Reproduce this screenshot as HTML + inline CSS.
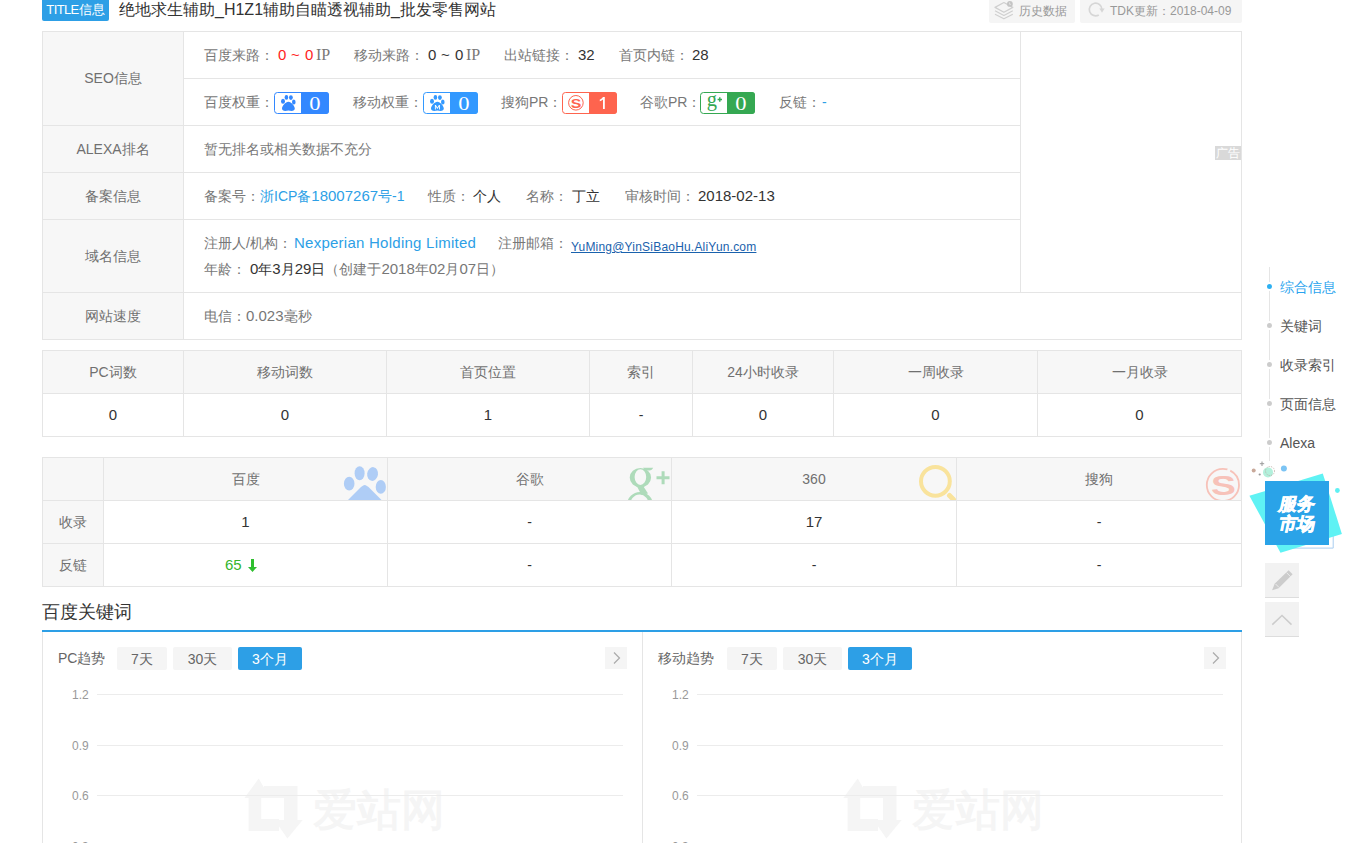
<!DOCTYPE html>
<html><head><meta charset="utf-8">
<style>
*{margin:0;padding:0;box-sizing:border-box}
html,body{width:1362px;height:843px;overflow:hidden;background:#fff}
body{position:relative;font-family:"Liberation Sans",sans-serif;font-size:14px;color:#333}
.a{position:absolute;white-space:nowrap}
.hl{position:absolute;height:1px;background:#e5e5e5}
.vl{position:absolute;width:1px;background:#e5e5e5}
.bg{position:absolute;background:#f7f7f7}
.lab{color:#777}
.hd{color:#707070}
.c{position:absolute;text-align:center;white-space:nowrap}
.n{font-size:15px;line-height:46px}
.m{font-size:15px}
.ip{font-family:"Liberation Serif",serif;font-size:16px;line-height:46px;color:#777}
</style></head><body>

<!-- title bar -->
<div class="a" style="left:42px;top:0;width:67px;height:21px;background:#2d9fe6;border-radius:0 0 2px 2px;color:#fff;font-size:13px;line-height:20px;text-align:center"><span style="letter-spacing:-0.6px">TITLE</span>信息</div>
<div class="a" style="left:119px;top:0;font-size:16px;line-height:20px;color:#333">绝地求生辅助_H1Z1辅助自瞄透视辅助_批发零售网站</div>
<div class="a" style="left:989px;top:0;width:86px;height:23px;background:#f5f5f5;border-radius:0 0 2px 2px"></div>
<div class="a" style="left:1080px;top:0;width:162px;height:23px;background:#f5f5f5;border-radius:0 0 2px 2px"></div>
<div class="a" style="left:1019px;top:0;font-size:12px;line-height:22px;color:#999">历史数据</div>
<div class="a" style="left:1110px;top:0;font-size:12px;line-height:22px;color:#999">TDK更新：2018-04-09</div>

<!-- info table -->
<div class="bg" style="left:42px;top:31px;width:141px;height:308px"></div>
<div class="hl" style="left:42px;top:31px;width:1200px"></div>
<div class="hl" style="left:183px;top:78px;width:837px"></div>
<div class="hl" style="left:42px;top:125px;width:978px"></div>
<div class="hl" style="left:42px;top:172px;width:978px"></div>
<div class="hl" style="left:42px;top:219px;width:978px"></div>
<div class="hl" style="left:42px;top:292px;width:1200px"></div>
<div class="hl" style="left:42px;top:339px;width:1200px"></div>
<div class="vl" style="left:42px;top:31px;height:309px"></div>
<div class="vl" style="left:183px;top:31px;height:309px"></div>
<div class="vl" style="left:1020px;top:31px;height:262px"></div>
<div class="vl" style="left:1241px;top:31px;height:309px"></div>
<div class="a" style="left:1215px;top:146px;width:26px;height:14px;background:#d9d9d9;color:#fff;font-size:12px;line-height:15px;text-align:center">广告</div>

<div class="c hd" style="left:43px;top:32px;width:140px;line-height:93px">SEO信息</div>
<div class="c hd" style="left:43px;top:126px;width:140px;line-height:46px">ALEXA排名</div>
<div class="c hd" style="left:43px;top:173px;width:140px;line-height:46px">备案信息</div>
<div class="c hd" style="left:43px;top:220px;width:140px;line-height:72px">域名信息</div>
<div class="c hd" style="left:43px;top:293px;width:140px;line-height:46px">网站速度</div>

<!-- row 1 -->
<div class="a lab" style="left:204px;top:32px;line-height:46px">百度来路：</div>
<div class="a n" style="left:278px;top:32px;color:#f22">0</div>
<div class="a n" style="left:291px;top:32px;color:#f22">~</div>
<div class="a n" style="left:305px;top:32px;color:#f22">0</div>
<div class="a ip" style="left:316px;top:32px">IP</div>
<div class="a lab" style="left:354px;top:32px;line-height:46px">移动来路：</div>
<div class="a n" style="left:428px;top:32px">0</div>
<div class="a n" style="left:441px;top:32px">~</div>
<div class="a n" style="left:455px;top:32px">0</div>
<div class="a ip" style="left:466px;top:32px">IP</div>
<div class="a lab" style="left:504px;top:32px;line-height:46px">出站链接：</div>
<div class="a n" style="left:578px;top:32px">32</div>
<div class="a lab" style="left:619px;top:32px;line-height:46px">首页内链：</div>
<div class="a n" style="left:692px;top:32px">28</div>

<!-- row 2 -->
<div class="a lab" style="left:204px;top:79px;line-height:46px">百度权重：</div>
<div class="a lab" style="left:353px;top:79px;line-height:46px">移动权重：</div>
<div class="a lab" style="left:501px;top:79px;line-height:46px">搜狗PR：</div>
<div class="a lab" style="left:640px;top:79px;line-height:46px">谷歌PR：</div>
<div class="a lab" style="left:779px;top:79px;line-height:46px">反链：</div>
<div class="a" style="left:822px;top:79px;line-height:46px;color:#2d9fe6">-</div>

<!-- row 3 -->
<div class="a lab" style="left:204px;top:126px;line-height:46px">暂无排名或相关数据不充分</div>
<!-- row 4 -->
<div class="a lab" style="left:204px;top:173px;line-height:46px">备案号：</div>
<div class="a" style="left:260px;top:173px;line-height:46px;color:#2d9fe6">浙ICP备<span class="m">18007267</span>号-1</div>
<div class="a lab" style="left:428px;top:173px;line-height:46px">性质：</div>
<div class="a" style="left:473px;top:173px;line-height:46px">个人</div>
<div class="a lab" style="left:526px;top:173px;line-height:46px">名称：</div>
<div class="a" style="left:572px;top:173px;line-height:46px">丁立</div>
<div class="a lab" style="left:625px;top:173px;line-height:46px">审核时间：</div>
<div class="a" style="left:698px;top:173px;line-height:46px"><span class="m">2018-02-13</span></div>
<!-- row 5 -->
<div class="a lab" style="left:204px;top:230px;line-height:26px">注册人/机构：</div>
<div class="a" style="left:294px;top:230px;line-height:26px;color:#2d9fe6"><span class="m" style="letter-spacing:0.25px">Nexperian Holding Limited</span></div>
<div class="a lab" style="left:498px;top:230px;line-height:26px">注册邮箱：</div>
<div class="a" style="left:571px;top:234px;line-height:26px;color:#1a62ad;font-size:12px;letter-spacing:0.2px;text-decoration:underline">YuMing@YinSiBaoHu.AliYun.com</div>
<div class="a lab" style="left:204px;top:256px;line-height:26px">年龄：</div>
<div class="a" style="left:250px;top:256px;line-height:26px"><span class="m">0</span>年<span class="m">3</span>月<span class="m">29</span>日<span class="lab">（创建于<span class="m">2018</span>年<span class="m">02</span>月<span class="m">07</span>日）</span></div>
<!-- row 6 -->
<div class="a lab" style="left:204px;top:293px;line-height:46px">电信：<span class="m">0.023</span>毫秒</div>

<!-- table 2 -->
<div class="bg" style="left:42px;top:350px;width:1200px;height:43px"></div>
<div class="hl" style="left:42px;top:350px;width:1200px"></div>
<div class="hl" style="left:42px;top:393px;width:1200px"></div>
<div class="hl" style="left:42px;top:436px;width:1200px"></div>
<div class="vl" style="left:42px;top:350px;height:87px"></div>
<div class="vl" style="left:183px;top:350px;height:87px"></div>
<div class="vl" style="left:386px;top:350px;height:87px"></div>
<div class="vl" style="left:589px;top:350px;height:87px"></div>
<div class="vl" style="left:692px;top:350px;height:87px"></div>
<div class="vl" style="left:833px;top:350px;height:87px"></div>
<div class="vl" style="left:1037px;top:350px;height:87px"></div>
<div class="vl" style="left:1241px;top:350px;height:87px"></div>
<div class="c hd" style="left:43px;top:351px;width:140px;line-height:42px">PC词数</div>
<div class="c hd" style="left:184px;top:351px;width:202px;line-height:42px">移动词数</div>
<div class="c hd" style="left:387px;top:351px;width:202px;line-height:42px">首页位置</div>
<div class="c hd" style="left:590px;top:351px;width:102px;line-height:42px">索引</div>
<div class="c hd" style="left:693px;top:351px;width:140px;line-height:42px">24小时收录</div>
<div class="c hd" style="left:834px;top:351px;width:203px;line-height:42px">一周收录</div>
<div class="c hd" style="left:1038px;top:351px;width:203px;line-height:42px">一月收录</div>
<div class="c" style="left:43px;top:394px;width:140px;line-height:42px"><span class="m">0</span></div>
<div class="c" style="left:184px;top:394px;width:202px;line-height:42px"><span class="m">0</span></div>
<div class="c" style="left:387px;top:394px;width:202px;line-height:42px"><span class="m">1</span></div>
<div class="c" style="left:590px;top:394px;width:102px;line-height:42px">-</div>
<div class="c" style="left:693px;top:394px;width:140px;line-height:42px"><span class="m">0</span></div>
<div class="c" style="left:834px;top:394px;width:203px;line-height:42px"><span class="m">0</span></div>
<div class="c" style="left:1038px;top:394px;width:203px;line-height:42px"><span class="m">0</span></div>

<!-- table 3 -->
<div class="bg" style="left:42px;top:457px;width:1200px;height:43px"></div>
<div class="bg" style="left:42px;top:500px;width:61px;height:86px"></div>
<div class="hl" style="left:42px;top:457px;width:1200px"></div>
<div class="hl" style="left:42px;top:500px;width:1200px"></div>
<div class="hl" style="left:42px;top:543px;width:1200px"></div>
<div class="hl" style="left:42px;top:586px;width:1200px"></div>
<div class="vl" style="left:42px;top:457px;height:130px"></div>
<div class="vl" style="left:103px;top:457px;height:130px"></div>
<div class="vl" style="left:387px;top:457px;height:130px"></div>
<div class="vl" style="left:671px;top:457px;height:130px"></div>
<div class="vl" style="left:956px;top:457px;height:130px"></div>
<div class="vl" style="left:1241px;top:457px;height:130px"></div>
<div class="c hd" style="left:104px;top:458px;width:283px;line-height:42px">百度</div>
<div class="c hd" style="left:388px;top:458px;width:283px;line-height:42px">谷歌</div>
<div class="c hd" style="left:672px;top:458px;width:284px;line-height:42px">360</div>
<div class="c hd" style="left:957px;top:458px;width:284px;line-height:42px">搜狗</div>
<div class="c hd" style="left:43px;top:501px;width:60px;line-height:42px">收录</div>
<div class="c hd" style="left:43px;top:544px;width:60px;line-height:42px">反链</div>
<div class="c" style="left:104px;top:501px;width:283px;line-height:42px"><span class="m">1</span></div>
<div class="c" style="left:388px;top:501px;width:283px;line-height:42px">-</div>
<div class="c" style="left:672px;top:501px;width:284px;line-height:42px"><span class="m">17</span></div>
<div class="c" style="left:957px;top:501px;width:284px;line-height:42px">-</div>
<div class="a" style="left:225px;top:544px;line-height:42px;color:#35b52d"><span class="m">65</span></div>
<svg class="a" style="left:247px;top:558px" width="11" height="15" viewBox="0 0 11 15"><path d="M4 1H7V9H10L5.5 14L1 9H4Z" fill="#2fbf2f"/></svg>
<div class="c" style="left:388px;top:544px;width:283px;line-height:42px">-</div>
<div class="c" style="left:672px;top:544px;width:284px;line-height:42px">-</div>
<div class="c" style="left:957px;top:544px;width:284px;line-height:42px">-</div>


<!-- badges -->
<svg class="a" style="left:274px;top:92px" width="55" height="22" viewBox="0 0 55 22">
<rect x="0.5" y="0.5" width="54" height="21" rx="3" fill="#fff" stroke="#3388ff"/>
<path d="M27 0H52A3 3 0 0 1 55 3V19A3 3 0 0 1 52 22H27Z" fill="#3388ff"/>
<ellipse cx="9" cy="9.2" rx="2" ry="2.5" fill="#3388ff"/><ellipse cx="12.4" cy="5.4" rx="1.8" ry="2.4" fill="#3388ff"/><ellipse cx="16.9" cy="5.6" rx="1.9" ry="2.4" fill="#3388ff"/><ellipse cx="19.8" cy="10" rx="1.8" ry="2.5" fill="#3388ff"/>
<path d="M14.4 9.8C11.6 9.8 8 14.2 8 16.6C8 19 10.6 19.3 14.4 18.6C18.2 19.3 20.8 19 20.8 16.6C20.8 14.2 17.2 9.8 14.4 9.8Z" fill="#3388ff"/>
<text x="0" y="0" text-anchor="middle" fill="#fff" font-family="Liberation Serif" font-size="18" transform="translate(41 18) scale(1.25 1)">0</text>
</svg>
<svg class="a" style="left:423px;top:92px" width="55" height="22" viewBox="0 0 55 22">
<rect x="0.5" y="0.5" width="54" height="21" rx="3" fill="#fff" stroke="#3399ff"/>
<path d="M27 0H52A3 3 0 0 1 55 3V19A3 3 0 0 1 52 22H27Z" fill="#3399ff"/>
<ellipse cx="9" cy="9.2" rx="2" ry="2.5" fill="#3399ff"/><ellipse cx="12.4" cy="5.4" rx="1.8" ry="2.4" fill="#3399ff"/><ellipse cx="16.9" cy="5.6" rx="1.9" ry="2.4" fill="#3399ff"/><ellipse cx="19.8" cy="10" rx="1.8" ry="2.5" fill="#3399ff"/>
<path d="M14.4 9.8C11.6 9.8 8 14.2 8 16.6C8 19 10.6 19.3 14.4 18.6C18.2 19.3 20.8 19 20.8 16.6C20.8 14.2 17.2 9.8 14.4 9.8Z" fill="#3399ff"/>
<path d="M11.9 17.6V12.9H12.9L14.4 15.6L15.9 12.9H16.9V17.6H16V14.6L14.7 16.8H14.1L12.8 14.6V17.6Z" fill="#fff"/>
<text x="0" y="0" text-anchor="middle" fill="#fff" font-family="Liberation Serif" font-size="18" transform="translate(41 18) scale(1.25 1)">0</text>
</svg>
<svg class="a" style="left:562px;top:92px" width="55" height="22" viewBox="0 0 55 22">
<rect x="0.5" y="0.5" width="54" height="21" rx="3" fill="#fff" stroke="#fe644e"/>
<path d="M27 0H52A3 3 0 0 1 55 3V19A3 3 0 0 1 52 22H27Z" fill="#fe644e"/>
<circle cx="13.9" cy="10.8" r="7.3" fill="none" stroke="#fe644e" stroke-width="1"/>
<text x="0" y="0" text-anchor="middle" fill="#fe644e" font-family="Liberation Sans" font-weight="bold" font-size="13" transform="translate(14.1 15.5) scale(1.22 1)">S</text>
<path d="M41 5H42.8V17H41V7.4C40.2 8.2 39.2 8.8 37.8 9.3V7.6C39.1 7.1 40.3 6.2 41 5Z" fill="#fff"/>
</svg>
<svg class="a" style="left:700px;top:92px" width="55" height="22" viewBox="0 0 55 22">
<rect x="0.5" y="0.5" width="54" height="21" rx="3" fill="#fff" stroke="#35a852"/>
<path d="M27 0H52A3 3 0 0 1 55 3V19A3 3 0 0 1 52 22H27Z" fill="#35a852"/>
<text x="11.9" y="13.6" text-anchor="middle" fill="#35a852" font-family="Liberation Serif" font-size="20.5">g</text>
<path d="M17.6 7.5H22M19.8 5.3V9.7" stroke="#35a852" stroke-width="1.4"/>
<text x="0" y="0" text-anchor="middle" fill="#fff" font-family="Liberation Serif" font-size="18" transform="translate(41 18) scale(1.25 1)">0</text>
</svg>

<!-- header watermarks -->
<svg class="a" style="left:340px;top:458px" width="47" height="42" viewBox="340 458 47 42">
<g fill="#afcdf6">
<ellipse cx="349.2" cy="483.7" rx="5.3" ry="6.9"/><ellipse cx="359.6" cy="473.2" rx="5" ry="7"/><ellipse cx="372.6" cy="474" rx="5.4" ry="6.9" transform="rotate(8 372.6 474)"/><ellipse cx="380.8" cy="486.9" rx="5.1" ry="6.9"/>
<path d="M347.5 500.5L359 489C362 486 363.5 485 364.7 485C366 485 367.5 486 370.5 489L382 500.5Z"/>
</g></svg>
<svg class="a" style="left:620px;top:458px" width="51" height="42" viewBox="620 458 51 42">
<g fill="#aedbba" fill-rule="evenodd">
<path d="M640.4 468A10.7 9.6 0 1 0 640.4 487.2A10.7 9.6 0 1 0 640.4 468ZM640.4 469.3A5.8 7.8 0 1 1 640.4 484.9A5.8 7.8 0 1 1 640.4 469.3Z"/>
<path d="M643 467.8H653.2C652.4 469.6 651 470.6 648.5 470.4L645 470Z"/>
<path d="M627 505A13 13 0 1 0 653 505A13 13 0 1 0 627 505ZM629.9 506A9.6 11.5 0 1 1 649.1 506A9.6 11.5 0 1 1 629.9 506Z"/>
<path d="M637 486.5H643.5L648 493.5L641.5 495Z"/>
</g>
<path d="M656.5 477.7H669.5M663.1 471.3V484.3" stroke="#aedbba" stroke-width="3"/>
</svg>
<svg class="a" style="left:910px;top:458px" width="46" height="42" viewBox="910 458 46 42">
<circle cx="935.4" cy="481.3" r="14.4" fill="none" stroke="#f9e39c" stroke-width="4"/>
<path d="M949.5 495.5L956 502" stroke="#f9e39c" stroke-width="5" stroke-linecap="round"/>
</svg>
<svg class="a" style="left:1200px;top:458px" width="41" height="42" viewBox="1200 458 41 42">
<circle cx="1222.9" cy="484.9" r="16.1" fill="none" stroke="#f7c2b9" stroke-width="1.8" stroke-dasharray="80 3 30"/>
<text x="0" y="0" text-anchor="middle" fill="#f7c2b9" font-family="Liberation Sans" font-weight="bold" font-size="27" transform="translate(1223.4 495.3) scale(1.38 1)">S</text>
</svg>

<!-- keywords section -->
<div class="a" style="left:42px;top:599px;font-size:18px;line-height:26px;color:#333">百度关键词</div>
<div class="a" style="left:42px;top:630px;width:1200px;height:2px;background:#2d9fe6"></div>
<div class="vl" style="left:42px;top:632px;height:211px"></div>
<div class="vl" style="left:642px;top:632px;height:211px"></div>
<div class="vl" style="left:1241px;top:632px;height:211px"></div>


<!-- chart panels -->
<div class="a" style="left:58px;top:645px;line-height:26px;color:#666">PC趋势</div>
<div class="a" style="left:117px;top:647px;width:50px;height:23px;background:#f5f5f5;border-radius:2px;text-align:center;line-height:23px;padding-top:1px;color:#666">7天</div>
<div class="a" style="left:173px;top:647px;width:59px;height:23px;background:#f5f5f5;border-radius:2px;text-align:center;line-height:23px;padding-top:1px;color:#666">30天</div>
<div class="a" style="left:238px;top:647px;width:64px;height:23px;background:#2d9fe6;border-radius:2px;text-align:center;line-height:23px;padding-top:1px;color:#fff">3个月</div>
<div class="a" style="left:605px;top:647px;width:22px;height:22px;background:#f5f5f5"></div>
<svg class="a" style="left:605px;top:647px" width="22" height="22"><path d="M9 5.5L14.5 11L9 16.5" fill="none" stroke="#aaa" stroke-width="1.2"/></svg>
<div class="a" style="left:658px;top:645px;line-height:26px;color:#666">移动趋势</div>
<div class="a" style="left:727px;top:647px;width:50px;height:23px;background:#f5f5f5;border-radius:2px;text-align:center;line-height:23px;padding-top:1px;color:#666">7天</div>
<div class="a" style="left:783px;top:647px;width:59px;height:23px;background:#f5f5f5;border-radius:2px;text-align:center;line-height:23px;padding-top:1px;color:#666">30天</div>
<div class="a" style="left:848px;top:647px;width:64px;height:23px;background:#2d9fe6;border-radius:2px;text-align:center;line-height:23px;padding-top:1px;color:#fff">3个月</div>
<div class="a" style="left:1204px;top:647px;width:22px;height:22px;background:#f5f5f5"></div>
<svg class="a" style="left:1204px;top:647px" width="22" height="22"><path d="M9 5.5L14.5 11L9 16.5" fill="none" stroke="#aaa" stroke-width="1.2"/></svg>

<!-- watermarks -->
<svg class="a" style="left:240px;top:770px" width="210" height="73" viewBox="240 770 210 73">
<g fill="#f5f5f5">
<path d="M258.7 778.6L244.4 798H248.6V831H279V819H261.2V798H270Z"/>
<path d="M264 786H297.5V820H302.6L287.4 838.5L274.7 820H284V798H264Z"/>
</g>
<text x="312.5" y="825" font-size="43.5" fill="#f5f5f5" stroke="#f5f5f5" stroke-width="1">爱站网</text>
</svg>
<svg class="a" style="left:839px;top:770px" width="210" height="73" viewBox="240 770 210 73">
<g fill="#f5f5f5">
<path d="M258.7 778.6L244.4 798H248.6V831H279V819H261.2V798H270Z"/>
<path d="M264 786H297.5V820H302.6L287.4 838.5L274.7 820H284V798H264Z"/>
</g>
<text x="312.5" y="825" font-size="43.5" fill="#f5f5f5" stroke="#f5f5f5" stroke-width="1">爱站网</text>
</svg>
<div class="hl" style="left:97px;top:694px;width:526px;background:#ececec"></div>
<div class="hl" style="left:97px;top:745px;width:526px;background:#ececec"></div>
<div class="hl" style="left:97px;top:795px;width:526px;background:#ececec"></div>
<div class="hl" style="left:697px;top:694px;width:526px;background:#ececec"></div>
<div class="hl" style="left:697px;top:745px;width:526px;background:#ececec"></div>
<div class="hl" style="left:697px;top:795px;width:526px;background:#ececec"></div>
<div class="a" style="left:72px;top:686px;font-size:12px;line-height:18px;color:#999">1.2</div>
<div class="a" style="left:72px;top:737px;font-size:12px;line-height:18px;color:#999">0.9</div>
<div class="a" style="left:72px;top:787px;font-size:12px;line-height:18px;color:#999">0.6</div>
<div class="a" style="left:72px;top:838px;font-size:12px;line-height:18px;color:#999">0.3</div>
<div class="a" style="left:672px;top:686px;font-size:12px;line-height:18px;color:#999">1.2</div>
<div class="a" style="left:672px;top:737px;font-size:12px;line-height:18px;color:#999">0.9</div>
<div class="a" style="left:672px;top:787px;font-size:12px;line-height:18px;color:#999">0.6</div>
<div class="a" style="left:672px;top:838px;font-size:12px;line-height:18px;color:#999">0.3</div>

<!-- right nav -->
<div class="a" style="left:1269px;top:267px;width:1px;height:194px;background:#e5e5e5"></div>

<div class="a" style="left:1265px;top:282px;width:9px;height:9px;border-radius:50%;background:#2cb0f2;border:2px solid #fff"></div>
<div class="a" style="left:1265px;top:321px;width:9px;height:9px;border-radius:50%;background:#ccc;border:2px solid #fff"></div>
<div class="a" style="left:1265px;top:360px;width:9px;height:9px;border-radius:50%;background:#ccc;border:2px solid #fff"></div>
<div class="a" style="left:1265px;top:399px;width:9px;height:9px;border-radius:50%;background:#ccc;border:2px solid #fff"></div>
<div class="a" style="left:1265px;top:438px;width:9px;height:9px;border-radius:50%;background:#ccc;border:2px solid #fff"></div>

<!-- service market -->
<svg class="a" style="left:1245px;top:455px" width="100" height="105" viewBox="1245 455 100 105">
<circle cx="1253.7" cy="470.6" r="2" fill="#c9a99a"/>
<circle cx="1268" cy="472.4" r="5" fill="#b3f0dc"/>
<circle cx="1270" cy="471" r="4.5" fill="none" stroke="#b9a8a0" stroke-width="0.8" stroke-dasharray="1.2 1.2"/>
<path d="M1262 461.5V466M1259.8 463.7H1264.2" stroke="#999" stroke-width="1"/>
<circle cx="1259.7" cy="474.5" r="1.1" fill="#999"/>
<circle cx="1283.9" cy="468.4" r="3" fill="#7cc4f4"/>
<circle cx="1337.4" cy="490.5" r="2.4" fill="#5ef0f3"/>
<path d="M1333.2 530V548.1H1290" fill="none" stroke="#a9cdf0" stroke-width="1"/>
<polygon points="1249.4,495.8 1322.8,473.4 1341.9,534 1280.5,552.8" fill="#5ff2f4"/>
<rect x="1265" y="481" width="64" height="64" fill="#2aa3e8"/>
<text x="0" y="0" text-anchor="middle" fill="#fff" stroke="#fff" stroke-width="0.6" font-size="18" font-weight="bold" transform="translate(1296 509.5) skewX(-12)">服务</text>
<text x="0" y="0" text-anchor="middle" fill="#fff" stroke="#fff" stroke-width="0.6" font-size="18" font-weight="bold" transform="translate(1296 529.5) skewX(-12)">市场</text>
</svg>

<!-- tool buttons -->
<div class="a" style="left:1265px;top:563px;width:34px;height:35px;background:#f2f2f2;border-bottom:1px solid #ddd"></div>
<svg class="a" style="left:1265px;top:563px" width="34" height="34" viewBox="1265 563 34 34">
<g transform="translate(-0.4 -2.8)">
<path d="M1289 573L1293 577L1279 591L1272.5 593L1275 586.5Z" fill="#ccc"/>
<path d="M1287 575.5L1291 579.5M1276 586.8L1279.5 590.3" stroke="#f2f2f2" stroke-width="0.8"/>
</g>
</svg>
<div class="a" style="left:1265px;top:602px;width:34px;height:35px;background:#f2f2f2;border-bottom:1px solid #ddd"></div>
<svg class="a" style="left:1265px;top:602px" width="34" height="34" viewBox="1265 602 34 34">
<path d="M1272.3 624.6L1282 615.5L1291.5 624.6" fill="none" stroke="#ccc" stroke-width="1.5"/>
</svg>

<!-- top icons -->
<svg class="a" style="left:993px;top:0" width="22" height="22" viewBox="993 0 22 22">
<g fill="none" stroke="#cfcfcf" stroke-width="1.2" stroke-linejoin="round">
<path d="M995 7.4L1003.9 2.5L1012.8 7.4L1003.9 12.3Z"/>
<path d="M995 10.8L1003.9 15.5L1012.8 10.8"/>
<path d="M995 14.2L1003.9 18.8L1012.8 14.2"/>
</g>
<circle cx="1009.9" cy="3.9" r="2.9" fill="#c4c4c4"/>
<path d="M1009.6 2.4V4.3H1011" fill="none" stroke="#eee" stroke-width="0.7"/>
</svg>
<svg class="a" style="left:1086px;top:0" width="22" height="22" viewBox="1086 0 22 22">
<path d="M1098.8 14.9A6.3 6.3 0 1 1 1101.9 9.4" fill="none" stroke="#d6d6d6" stroke-width="1.7"/>
<path d="M1099.4 8.6H1104.6L1102 12.8Z" fill="#d6d6d6"/>
</svg>

<div class="a" style="left:1280px;top:274px;line-height:26px;color:#29a3ee">综合信息</div>
<div class="a" style="left:1280px;top:313px;line-height:26px;color:#555">关键词</div>
<div class="a" style="left:1280px;top:352px;line-height:26px;color:#555">收录索引</div>
<div class="a" style="left:1280px;top:391px;line-height:26px;color:#555">页面信息</div>
<div class="a" style="left:1280px;top:430px;line-height:26px;color:#555">Alexa</div>

</body></html>
